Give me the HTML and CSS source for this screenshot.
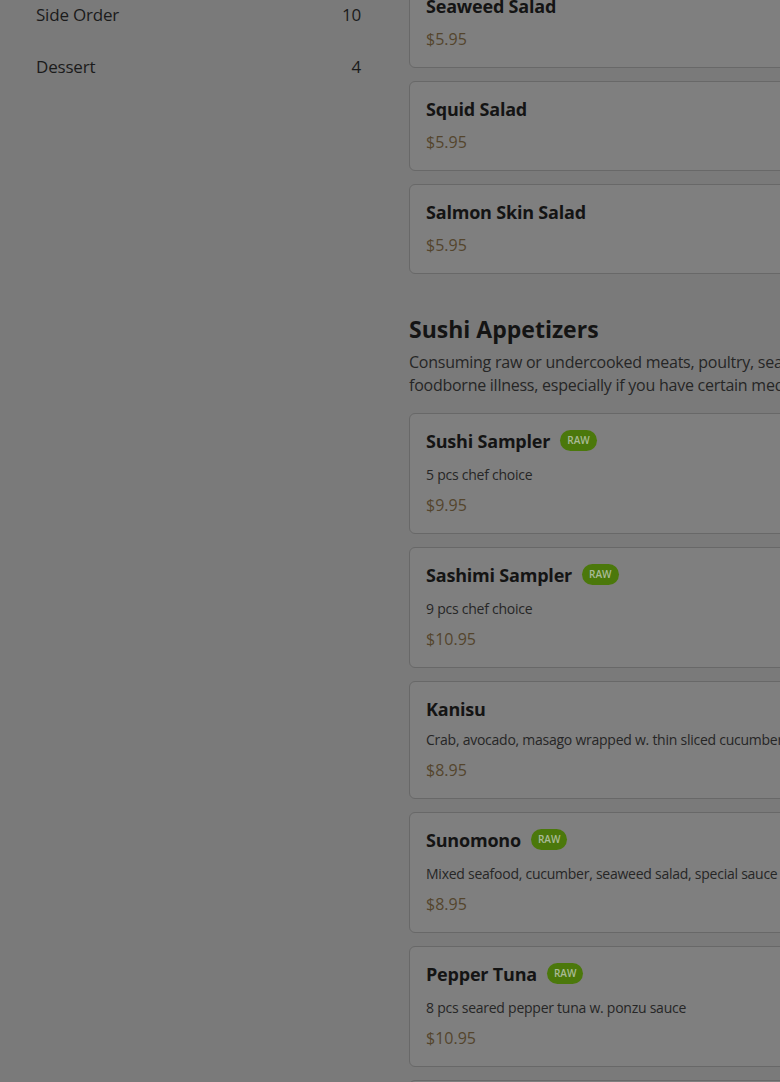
FILE: index.html
```html
<!DOCTYPE html>
<html lang="en">
<head>
<meta charset="utf-8">
<title>Menu</title>
<link rel="stylesheet" href="styles.css">
</head>
<body>
<div class="page">
  <aside class="sidebar">
    <div class="cat"><span>Side Order</span><span>10</span></div>
    <div class="cat"><span>Dessert</span><span>4</span></div>
  </aside>
  <main class="menu">
    <div class="list">
      <div class="card"><div class="title-row"><span class="title">Seaweed Salad</span></div><div class="price">$5.95</div></div>
      <div class="card"><div class="title-row"><span class="title">Squid Salad</span></div><div class="price">$5.95</div></div>
      <div class="card"><div class="title-row"><span class="title">Salmon Skin Salad</span></div><div class="price">$5.95</div></div>
    </div>
    <section class="section">
      <h2 class="section-title">Sushi Appetizers</h2>
      <p class="section-desc">Consuming raw or undercooked meats, poultry, seafood, shellfish, or eggs may increase your risk of foodborne illness, especially if you have certain medical conditions.</p>
      <div class="list">
        <div class="card"><div class="title-row badge-row"><span class="title">Sushi Sampler</span><span class="badge">RAW</span></div><div class="desc">5 pcs chef choice</div><div class="price">$9.95</div></div>
        <div class="card"><div class="title-row badge-row"><span class="title">Sashimi Sampler</span><span class="badge">RAW</span></div><div class="desc">9 pcs chef choice</div><div class="price">$10.95</div></div>
        <div class="card"><div class="title-row"><span class="title">Kanisu</span></div><div class="desc">Crab, avocado, masago wrapped w. thin sliced cucumber</div><div class="price">$8.95</div></div>
        <div class="card"><div class="title-row badge-row"><span class="title">Sunomono</span><span class="badge">RAW</span></div><div class="desc">Mixed seafood, cucumber, seaweed salad, special sauce</div><div class="price">$8.95</div></div>
        <div class="card"><div class="title-row badge-row"><span class="title">Pepper Tuna</span><span class="badge">RAW</span></div><div class="desc">8 pcs seared pepper tuna w. ponzu sauce</div><div class="price">$10.95</div></div>
        <div class="card"><div class="title-row"><span class="title">Spicy Tuna Tartare</span></div><div class="price">$10.95</div></div>
      </div>
    </section>
  </main>
</div>
</body>
</html>
```
FILE: styles.css
```css
html, body {
  margin: 0;
  padding: 0;
  background: #7a7a7a;
  overflow: hidden;
  height: 1082px;
}
body {
  font-family: "Open Sans", "Noto Sans", sans-serif;
  color: #151515;
}
.page {
  display: flex;
  gap: 48px;
  padding-left: 36px;
  margin-top: -22px;
  width: 1300px;
}
.sidebar {
  width: 325px;
  flex: none;
  padding-top: 10px;
}
.cat {
  display: flex;
  justify-content: space-between;
  align-items: center;
  height: 52px;
  font-size: 17px;
  color: #1b1b1b;
  letter-spacing: -0.2px;
}
.menu {
  width: 770px;
  flex: none;
}
.list {
  display: flex;
  flex-direction: column;
  gap: 13px;
}
.card {
  background: #7f7f7f;
  border: 1px solid #686868;
  border-radius: 6px;
  padding: 16px;
}
.title-row {
  display: flex;
  align-items: center;
  gap: 10px;
  height: 22px;
}
.badge-row {
  align-items: flex-start;
  height: 25px;
}
.title {
  font-size: 18px;
  line-height: 22px;
  font-weight: 700;
  color: #141414;
  letter-spacing: -0.2px;
}
.badge {
  background: #4b780b;
  color: #a9ba96;
  font-size: 10px;
  font-weight: 600;
  border-radius: 11px;
  height: 21px;
  line-height: 21px;
  padding: 0 7px;
}
.desc {
  margin-top: 10px;
  font-size: 14px;
  line-height: 20px;
  color: #262626;
  letter-spacing: -0.25px;
}
.price {
  margin-top: 10px;
  font-size: 16px;
  line-height: 24px;
  color: #54452d;
}
.desc + .price {
  margin-top: 8px;
}
.section {
  margin-top: 39px;
}
.section-title {
  margin: 0;
  font-size: 23px;
  line-height: 32px;
  font-weight: 700;
  color: #141414;
}
.section-desc {
  margin: 6px 0 16px;
  font-size: 16px;
  line-height: 23px;
  color: #262626;
  letter-spacing: -0.25px;
}
```
